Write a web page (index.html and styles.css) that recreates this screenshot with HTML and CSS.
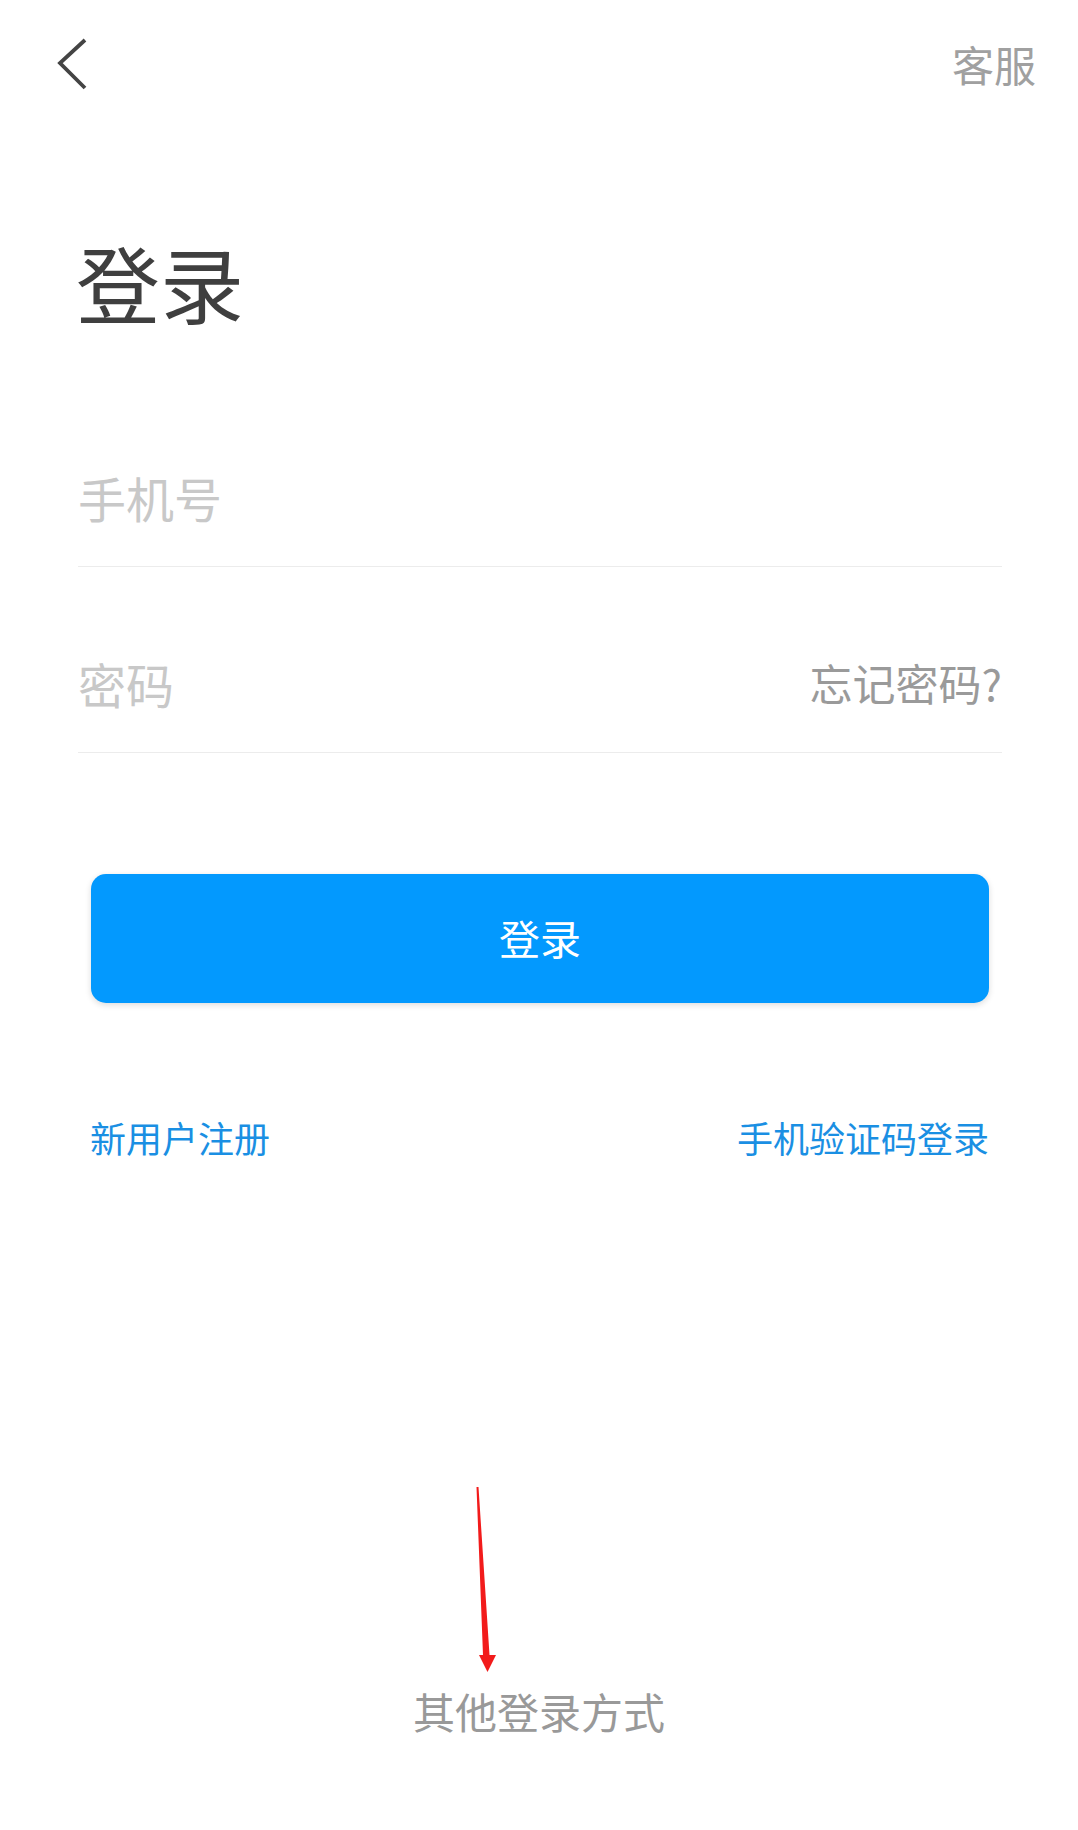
FILE: index.html
```html
<!DOCTYPE html>
<html lang="zh-CN">
	<head>
		<meta charset="UTF-8">
		<title>登录</title>
		<link rel="stylesheet" href="styles.css">
	</head>
	<body>
		<div class="app">
			<div class="topBar">
				<svg class="backIcon" width="36" height="54" viewBox="0 0 36 54">
					<polyline points="31,3 6,26 31,51" fill="none" stroke="#444" stroke-width="3.8"/>
				</svg>
				<span class="service">客服</span>
			</div>
			<h1 class="pageTitle">登录</h1>
			<form class="loginForm">
				<div class="field">
					<span class="placeholder">手机号</span>
				</div>
				<div class="field">
					<span class="placeholder">密码</span>
					<span class="forgot">忘记密码?</span>
				</div>
				<button type="button" class="loginButton">登录</button>
				<div class="links">
					<span>新用户注册</span>
					<span>手机验证码登录</span>
				</div>
			</form>
			<p class="otherWays">其他登录方式</p>
			<!-- red annotation arrow drawn over the page -->
			<svg class="markArrow" width="30" height="200" viewBox="0 0 30 200">
				<polygon points="5.5,7 7.5,7 18.5,175 25,175 16.5,192 8,175 12,175" fill="#f21b1b"/>
			</svg>
		</div>
	</body>
</html>
```

FILE: styles.css
```css
body {
	margin: 0;
	background-color: #ffffff;
	font-family: "Noto Sans CJK SC", "Noto Sans", sans-serif;
}
.app {
	position: relative;
	width: 1078px;
	height: 1830px;
}
.topBar {
	height: 128px;
	display: flex;
	align-items: center;
	justify-content: space-between;
	padding: 0 42px 0 54px;
}
.backIcon {
	display: block;
}
.service {
	font-size: 42px;
	line-height: 1;
	color: #a0a0a0;
}
.pageTitle {
	margin: 112px 0 0 76px;
	font-size: 84px;
	line-height: 1;
	font-weight: normal;
	color: #3f3f3f;
}
.loginForm {
	margin: 57px 76px 0 78px;
}
.field {
	display: flex;
	align-items: center;
	justify-content: space-between;
	height: 139px;
	padding-top: 46px;
	border-bottom: 1px solid #ececec;
}
.placeholder {
	font-size: 48px;
	line-height: 1;
	color: #c8c8c8;
}
.forgot {
	font-size: 43px;
	line-height: 1;
	color: #9a9a9a;
}
.loginButton {
	display: block;
	width: calc(100% - 26px);
	height: 129px;
	margin: 121px 13px 0 13px;
	padding: 0 0 3px 0;
	border: none;
	border-radius: 15px;
	background-color: #0399fe;
	box-shadow: 0 2px 6px rgba(0, 0, 0, 0.14);
	color: #ffffff;
	font-family: inherit;
	font-size: 41px;
	cursor: pointer;
}
.links {
	display: flex;
	justify-content: space-between;
	margin: 116px 13px 0 12px;
	font-size: 36px;
	line-height: 36px;
	color: #1a8fe3;
}
.otherWays {
	margin: 535px 0 0 0;
	text-align: center;
	font-size: 42px;
	line-height: 42px;
	color: #999999;
}
.markArrow {
	position: absolute;
	left: 471px;
	top: 1480px;
}
```
